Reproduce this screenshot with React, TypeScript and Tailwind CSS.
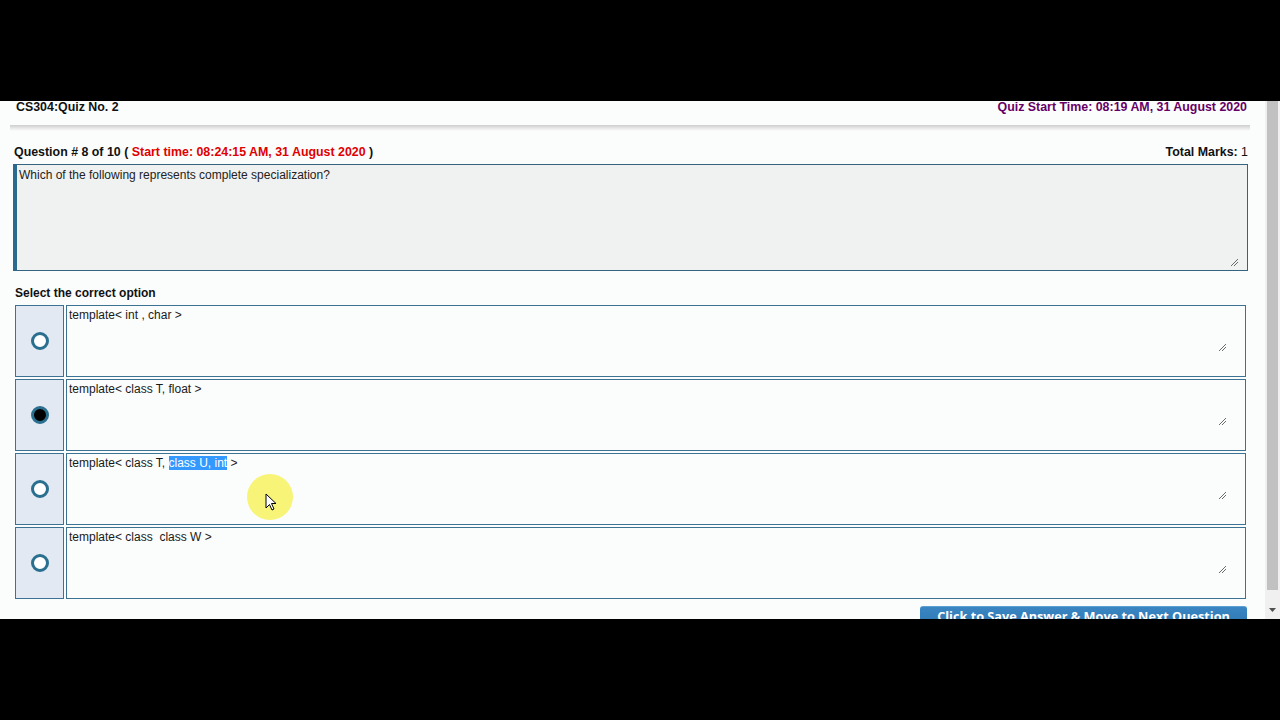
import React from "react";

const options = [
  { id: 1, text: "template< int , char >", checked: false },
  { id: 2, text: "template< class T, float >", checked: true },
  { id: 3, text: "", checked: false },
  { id: 4, text: "template< class  class W >", checked: false },
];

function ResizeGrip() {
  return (
    <svg width="9" height="9" viewBox="0 0 9 9" className="block">
      <line x1="1" y1="8" x2="8" y2="1" stroke="#6b6b6b" strokeWidth="1" />
      <line x1="4" y1="8" x2="8" y2="4" stroke="#6b6b6b" strokeWidth="1" />
    </svg>
  );
}

function Radio({ checked }: { checked: boolean }) {
  return (
    <span
      className={
        "block h-[18px] w-[18px] rounded-full border-[3px] border-[#2a6f8e] " +
        (checked ? "bg-black" : "bg-white")
      }
    />
  );
}

function OptionRow({ id, text, checked }: { id: number; text: string; checked: boolean }) {
  return (
    <div className="flex h-[72px] gap-[2px]">
      <div className="flex w-[49px] items-center justify-center border border-[#3c7393] bg-[#e2e9f3]">
        <Radio checked={checked} />
      </div>
      <div className="flex flex-1 flex-col border border-[#3c7393] bg-[#fbfdfd]">
        <div className="mr-[18px] flex h-[47px] flex-col justify-between pl-[2px] pt-[2px]">
          <div className="whitespace-pre text-[12px] leading-[14px] text-[#1a1a1a]">
            {id === 3 ? (
              <>
                template&lt; class T,{" "}
                <span className="bg-[#3399ff] text-white">class U, int</span> &gt;
              </>
            ) : (
              text
            )}
          </div>
          <div className="flex justify-end pb-[1px]">
            <ResizeGrip />
          </div>
        </div>
      </div>
    </div>
  );
}

export default function App() {
  return (
    <div
      className="flex h-[720px] w-[1280px] flex-col bg-black"
      style={{ fontFamily: '"Liberation Sans", Arial, sans-serif' }}
    >
      <div className="h-[101px] shrink-0" />
      <div className="relative flex h-[518px] shrink-0 overflow-hidden bg-[#fbfdfc]">
        <div className="flex-1 overflow-hidden">
          <div className="flex h-[24px] items-start justify-between pl-[16px] pr-[18px] text-[12.4px] font-bold leading-[12px]">
            <span className="text-[#111]">CS304:Quiz No. 2</span>
            <span className="text-[#660066]">Quiz Start Time: 08:19 AM, 31 August 2020</span>
          </div>
          <div className="ml-[10px] mr-[15px] h-[6px] bg-gradient-to-b from-[#cdcdcd] via-[#e6e6e6] to-transparent" />

          <div className="mt-[14px] flex h-[14px] justify-between pl-[14px] pr-[17px] text-[12.4px] leading-[14px] text-[#111]">
            <span className="font-bold">
              Question # 8 of 10 ({" "}
              <span className="text-[#e00000]">Start time: 08:24:15 AM, 31 August 2020</span> )
            </span>
            <span>
              <span className="font-bold">Total Marks:</span> 1
            </span>
          </div>

          <div className="ml-[13px] mr-[17px] mt-[5px] flex h-[107px] flex-col justify-between border border-l-[4px] border-[#34647f] border-l-[#2a6a8e] bg-[#f0f1f1] pb-[3px] pl-[2px] pr-[8px] pt-[3px]">
            <div className="text-[12px] leading-[14px] text-[#222]">
              Which of the following represents complete specialization?
            </div>
            <div className="flex justify-end">
              <ResizeGrip />
            </div>
          </div>

          <div className="mt-[15px] pl-[15px] text-[12px] font-bold leading-[14px] text-[#111]">
            Select the correct option
          </div>

          <div className="ml-[15px] mr-[19px] mt-[5px] flex flex-col gap-[2px]">
            {options.map((o) => (
              <OptionRow key={o.id} {...o} />
            ))}
          </div>

          <div className="mr-[18px] mt-[7px] flex justify-end">
            <button
              type="button"
              className="w-[327px] rounded-t-[3px] border-t border-[#5c9fd2] bg-gradient-to-b from-[#3a86c2] to-[#2a73ad] pb-[10px] pt-[2px] text-[12.7px] font-bold leading-[14px] text-white"
              style={{ fontFamily: '"Open Sans", "DejaVu Sans", sans-serif' }}
            >
              Click to Save Answer &amp; Move to Next Question
            </button>
          </div>
        </div>

        <div className="flex w-[15px] shrink-0 flex-col bg-[#f0f0f0]">
          <div className="mx-[2px] h-[489px] bg-[#c1c1c1]" />
          <div className="flex flex-1 items-center justify-center pt-[10px]">
            <svg width="7" height="4" viewBox="0 0 7 4">
              <polygon points="0,0 7,0 3.5,4" fill="#505050" />
            </svg>
          </div>
        </div>

        <div className="pointer-events-none absolute left-[247px] top-[373px] h-[46px] w-[46px] rounded-full bg-[#f6f04a]/75" />
        <svg
          className="pointer-events-none absolute left-[265px] top-[392px]"
          width="12"
          height="19"
          viewBox="0 0 12 19"
        >
          <path
            d="M1 1 L1 15 L4.5 11.5 L7 17 L9 16 L6.5 10.5 L11 10.5 Z"
            fill="white"
            stroke="black"
            strokeWidth="1"
            strokeLinejoin="round"
          />
        </svg>
      </div>
      <div className="flex-1" />
    </div>
  );
}
